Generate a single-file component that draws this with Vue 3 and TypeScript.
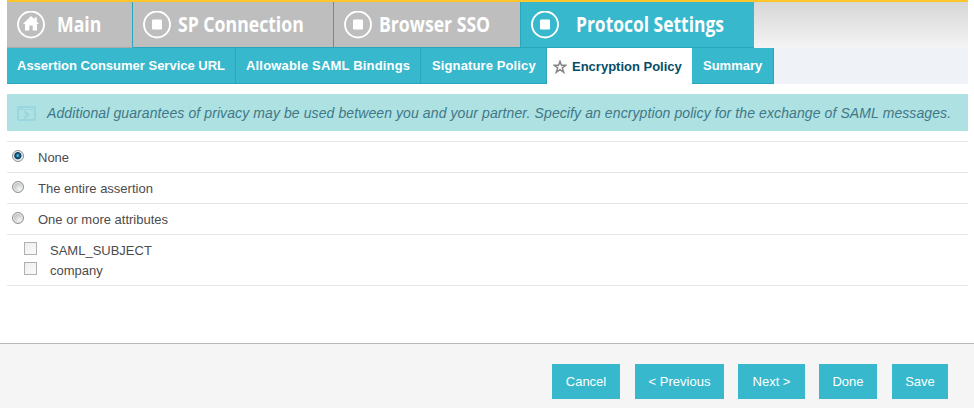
<script setup lang="ts">
import { ref } from 'vue'

interface Stage { label: string; key: string }
interface Step { label: string; key: string; active?: boolean }

const stages: Stage[] = [
  { label: 'Main', key: 'main' },
  { label: 'SP Connection', key: 'connection' },
  { label: 'Browser SSO', key: 'browser' },
  { label: 'Protocol Settings', key: 'protocol' },
]
const steps: Step[] = [
  { label: 'Assertion Consumer Service URL', key: 'acs' },
  { label: 'Allowable SAML Bindings', key: 'bindings' },
  { label: 'Signature Policy', key: 'signature' },
  { label: 'Encryption Policy', key: 'encryption', active: true },
  { label: 'Summary', key: 'summary' },
]
const options = ['None', 'The entire assertion', 'One or more attributes']
const attributes = ['SAML_SUBJECT', 'company']
const actions = [
  { label: 'Cancel', key: 'cancel' },
  { label: '< Previous', key: 'previous' },
  { label: 'Next >', key: 'next' },
  { label: 'Done', key: 'done' },
  { label: 'Save', key: 'save' },
]
const selected = ref('None')
</script>

<template>
  <div class="page">
    <main class="content">
      <nav class="stages">
        <a v-for="s in stages" :key="s.key" class="stage" :class="s.key">
          <svg class="stage-icon" width="28" height="28" viewBox="0 0 28 28">
            <circle cx="14" cy="13.5" r="13" fill="none" stroke="#fff" stroke-width="1.9" />
            <path v-if="s.key === 'main'" d="M14 5 17.4 8.3V6.4h2.4v4.2l2.2 2.3h-2V19.4h-4.3v-4.9h-3.4v4.9H8v-6.5H6Z" fill="#fff" />
            <rect v-else x="9" y="8.5" width="10" height="10" rx="1.3" fill="#fff" />
          </svg>
          <span class="stage-label">{{ s.label }}</span>
        </a>
      </nav>
      <nav class="steps">
        <a v-for="s in steps" :key="s.key" class="step" :class="[s.key, { active: s.active }]">
          <svg v-if="s.active" class="star" width="14" height="14" viewBox="0 0 14 14">
            <path d="M7 1.3 8.4 5.3H12.8L9.3 7.9 10.7 12.3 7 9.7 3.3 12.3 4.7 7.9 1.2 5.3H5.6Z" fill="#fff" stroke="#858585" stroke-width="1.5" />
          </svg>
          <span>{{ s.label }}</span>
        </a>
      </nav>
      <p class="notice">
        <svg class="notice-icon" width="19" height="15" viewBox="0 0 19 15">
          <rect x="1" y="1" width="17" height="13" rx="1" fill="none" stroke="#99d6e0" stroke-width="2" />
          <path d="M1 2.5H18" stroke="#99d6e0" stroke-width="3" />
          <path d="M2 2.5H3M4 2.5H5M6 2.5H17" stroke="#aee1e1" stroke-width="1" />
          <path d="M7.2 5.2 11.2 8.7 7.2 12.2" fill="none" stroke="#99d6e0" stroke-width="2.2" />
        </svg>
        <span class="notice-text">Additional guarantees of privacy may be used between you and your partner. Specify an encryption policy for the exchange of SAML messages.</span>
      </p>
      <form class="policy">
        <label v-for="o in options" :key="o" class="option">
          <input v-model="selected" type="radio" name="policy" :value="o" class="radio">
          <span>{{ o }}</span>
        </label>
        <div class="attributes">
          <label v-for="a in attributes" :key="a" class="attribute">
            <input type="checkbox" class="check" disabled>
            <span>{{ a }}</span>
          </label>
        </div>
      </form>
    </main>
    <footer class="actions">
      <button v-for="a in actions" :key="a.key" type="button" class="action" :class="a.key">{{ a.label }}</button>
    </footer>
  </div>
</template>

<style>
body { margin: 0; background: #fff; }
</style>

<style scoped>
* { box-sizing: border-box; }
.page {
  display: flex;
  flex-direction: column;
  width: 974px;
  height: 408px;
  overflow: hidden;
  font: 13px/16px "Liberation Sans", Arial, sans-serif;
  color: #4c4c4c;
  white-space: nowrap;
}
.content { flex: 1; padding: 0 6px 0 7px; }
.stages {
  display: flex;
  height: 48px;
  border-top: 2px solid #ffc62b;
  background: linear-gradient(#d7d7d7, #f4f4f4);
}
.stage {
  display: flex;
  align-items: flex-start;
  padding: 9px 0 0 10px;
  border-right: 1px solid #2ba5b9;
  border-bottom: 1px solid #2ba5b9;
  background: #bebebe;
  color: #fff;
}
.main { width: 126px; border-bottom-color: #aaa; }
.connection { width: 201px; }
.browser { width: 187px; border-bottom-color: #2ba5b9; }
.protocol { width: 233px; background: #37b8cd; border-right: 0; }
.stage-icon { flex: none; margin-right: 12px; }
.connection .stage-icon, .browser .stage-icon { margin-right: 7px; }
.protocol .stage-icon { margin-right: 17px; }
.stage-label {
  font: bold 21px/26px "Open Sans", "Noto Sans", sans-serif;
  transform: scaleX(.84);
  transform-origin: left;
}
.protocol .stage-label { transform: scaleX(.83); }
.steps { display: flex; height: 36px; background: #eff3f8; }
.step {
  display: flex;
  align-items: flex-start;
  padding: 10px 0 0 10px;
  border-right: 1px solid #2ba5b9;
  border-bottom: 1px solid #2ba5b9;
  background: #37b8cd;
  color: #fff;
  font-weight: bold;
}
.acs { width: 229px; }
.bindings { width: 185px; letter-spacing: .18px; }
.signature { width: 126px; padding-left: 11px; letter-spacing: .12px; }
.encryption { width: 145px; }
.summary { width: 82px; padding-left: 11px; }
.active { padding: 11px 0 0 6px; border: 0; background: #fff; color: #064d68; }
.star { flex: none; margin: 1px 5px 0 0; }
.notice {
  display: flex;
  align-items: center;
  height: 37px;
  margin: 10px 0;
  padding-left: 10px;
  background: #aee1e1;
  color: #3f7888;
  font-size: 14px;
  font-style: italic;
  letter-spacing: .095px;
}
.notice-icon { margin: 2px 11px 0 0; }
.option {
  display: flex;
  align-items: center;
  height: 31px;
  padding: 2px 0 0 5px;
  border-top: 1px solid #e5e5e5;
}
.radio {
  appearance: none;
  flex: none;
  width: 12px;
  height: 12px;
  margin: -5px 14px 0 0;
  border: 1px solid #909090;
  border-radius: 50%;
  background: radial-gradient(circle at 65% 70%, #f5f5f5, #c4c8cc 60%);
  box-shadow: inset 0 0 0 1px #eee;
}
.radio:checked { background: radial-gradient(circle at 48% 46%, #75cdf0 0, #126792 1.8px, #123b57 3.2px, #e5eef3 4.2px); }
.attributes {
  height: 52px;
  padding: 6px 0 0 17px;
  border-top: 1px solid #e5e5e5;
  border-bottom: 1px solid #e5e5e5;
}
.attribute { display: flex; align-items: center; height: 20px; }
.check {
  appearance: none;
  flex: none;
  width: 13px;
  height: 13px;
  margin: -5px 13px 0 0;
  border: 1px solid #b1b1b1;
  background: linear-gradient(135deg, #eee, #fafafa);
}
.actions {
  display: flex;
  align-items: flex-start;
  justify-content: flex-end;
  height: 65px;
  padding: 20px 26px 0 0;
  border-top: 1px solid #b9b9b9;
  background: #f5f5f5;
}
.action {
  height: 35px;
  margin: 0 0 0 14px;
  padding: 0;
  border: 0;
  background: #37b8cd;
  color: #fff;
  font: inherit;
}
.cancel { width: 68px; }
.previous { width: 89px; margin-left: 15px; }
.next { width: 67px; }
.done { width: 58px; }
.save { width: 56px; margin-left: 15px; }
</style>
